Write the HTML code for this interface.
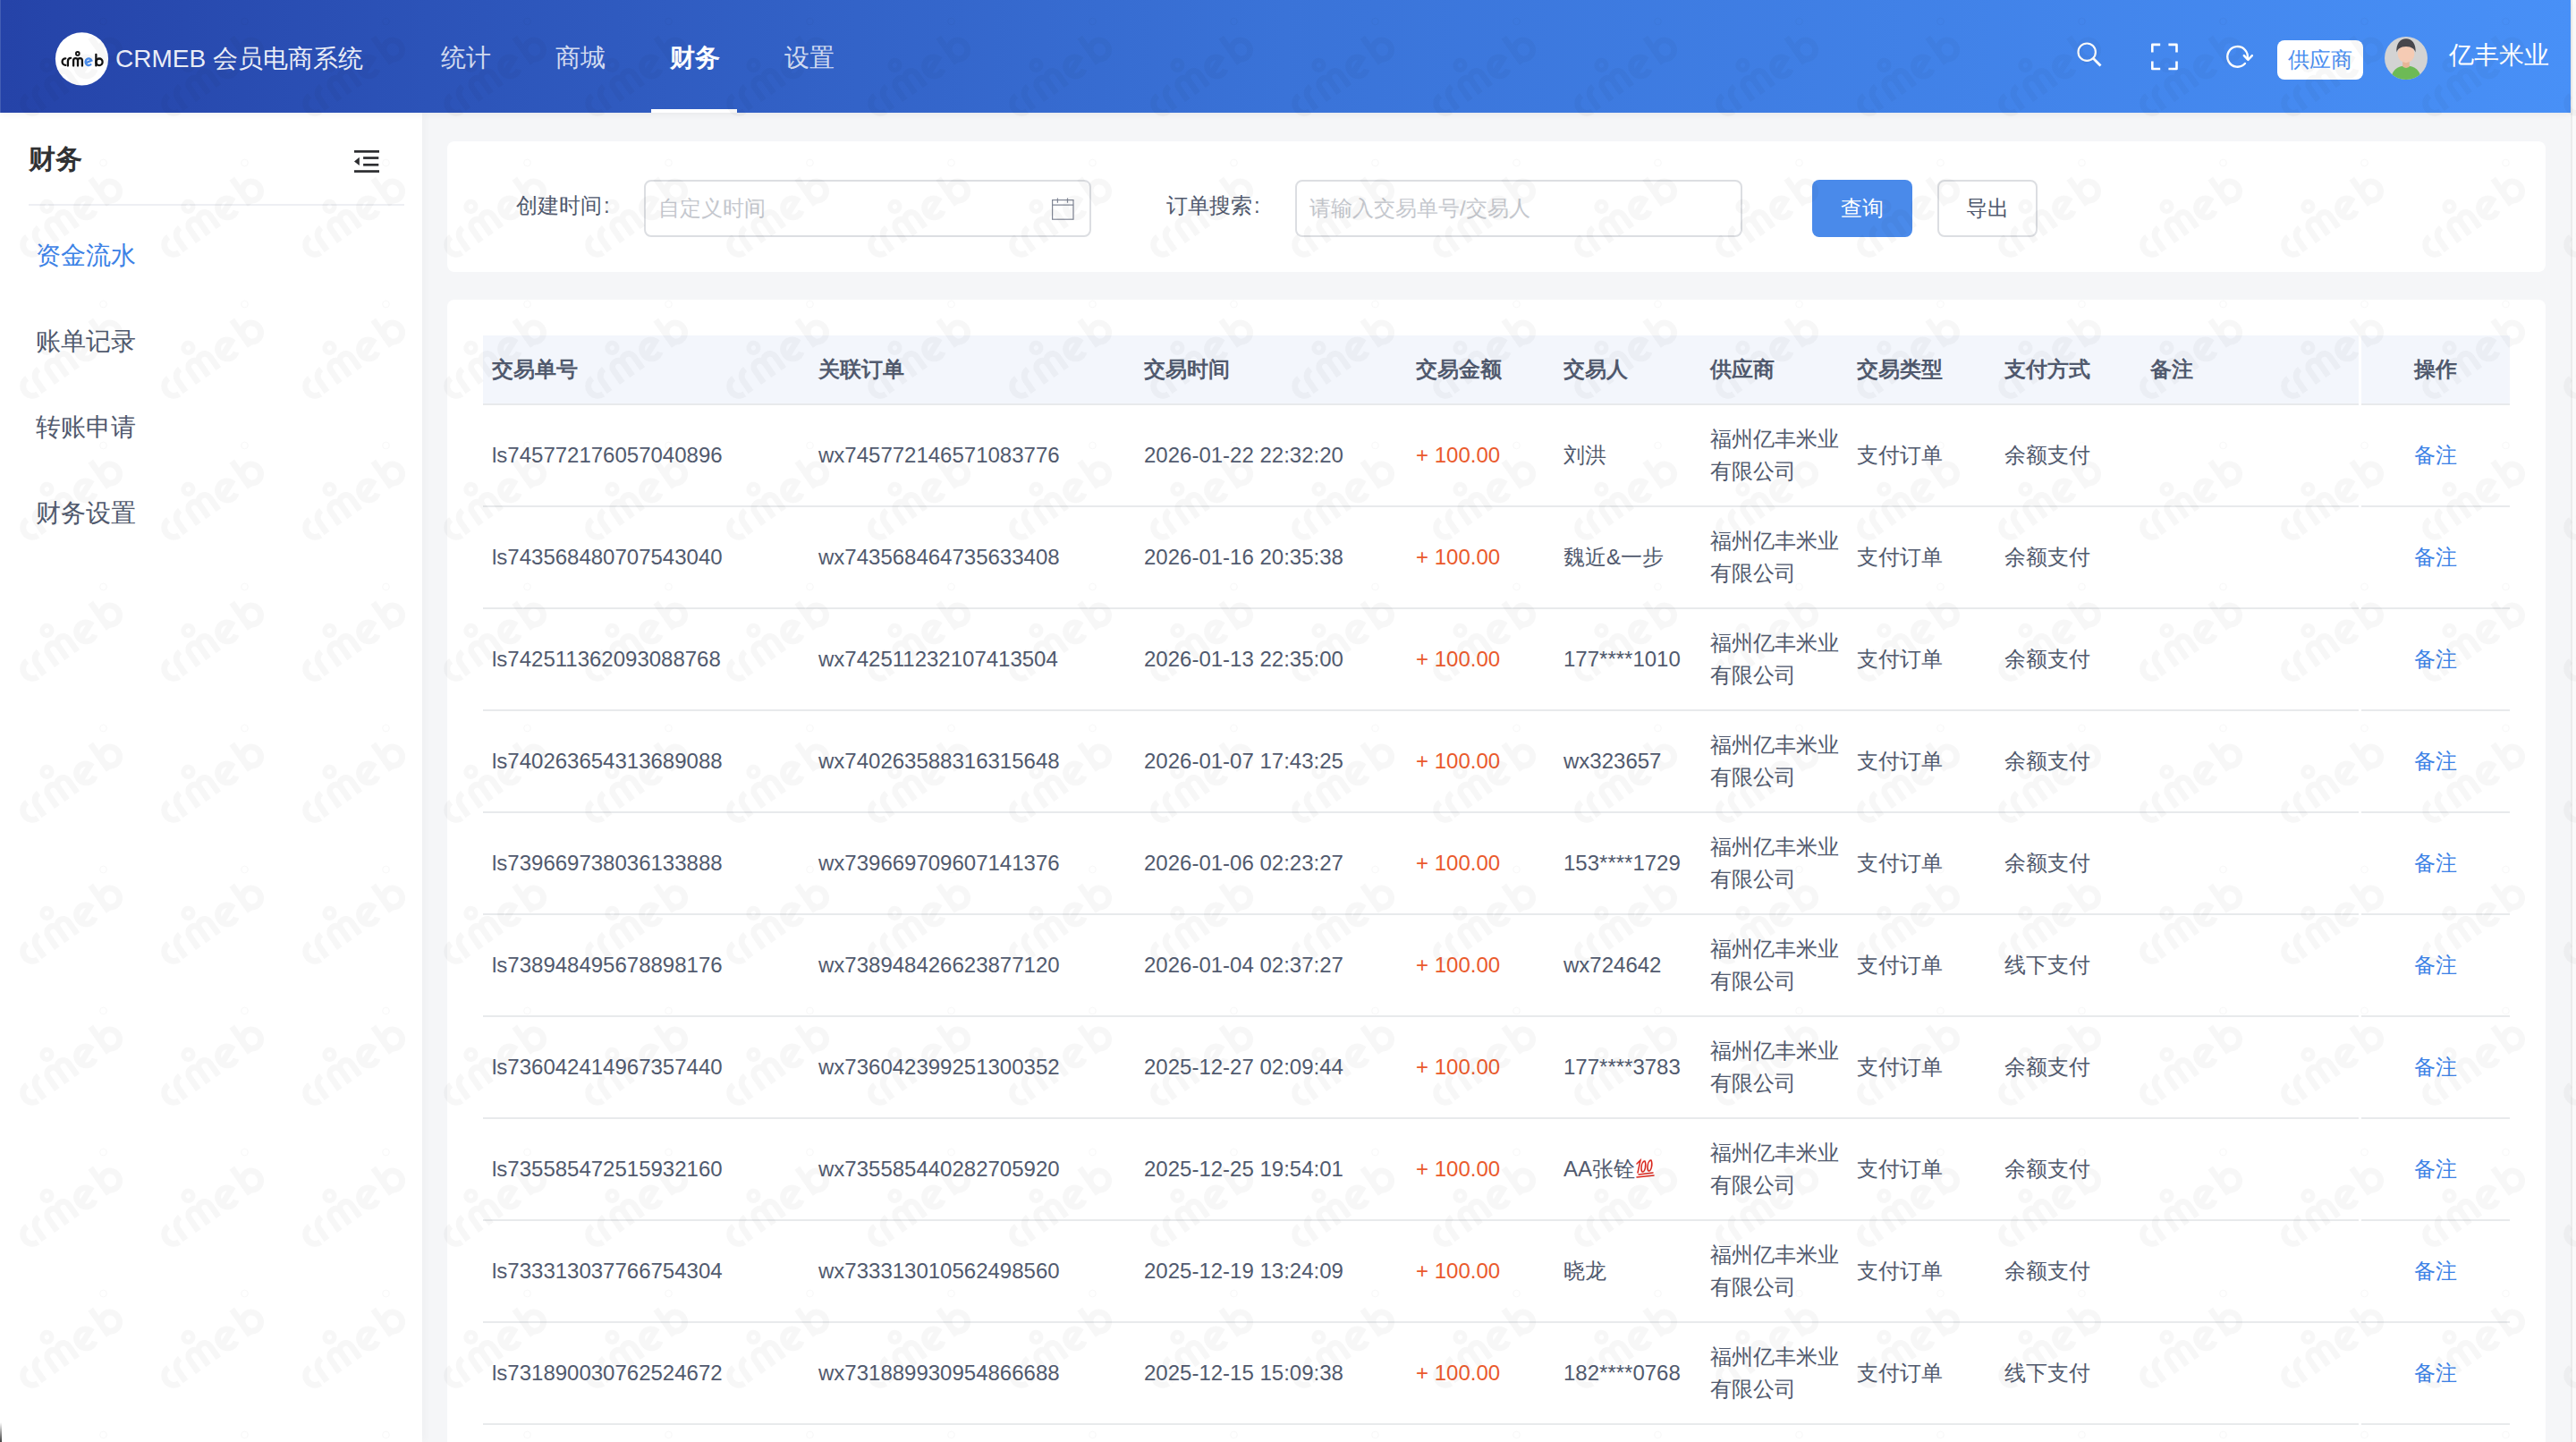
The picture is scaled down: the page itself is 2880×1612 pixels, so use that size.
<!DOCTYPE html>
<html><head><meta charset="utf-8">
<style>
*{box-sizing:border-box;margin:0;padding:0}
html,body{width:2880px;height:1612px;overflow:hidden;background:#f5f6f8;font-family:"Liberation Sans",sans-serif;color:#515a6e}
.abs{position:absolute}
#hdr{position:absolute;left:0;top:0;width:2874px;height:126px;background:linear-gradient(90deg,#2543a8 0%,#3a73d8 50%,#4890f7 100%);box-shadow:0 2px 8px rgba(0,0,0,.06);z-index:2}
#sb{position:absolute;left:2874px;top:0;width:6px;height:1612px;background:#fafafa;border-left:2px solid #ececec}
#side{position:absolute;left:0;top:126px;width:472px;height:1486px;background:#fff;box-shadow:2px 0 10px rgba(0,0,0,.035)}
.nav{position:absolute;top:45px;font-size:28px;line-height:40px;color:rgba(255,255,255,.8);white-space:nowrap}
.card{position:absolute;left:500px;width:2346px;background:#fff;border-radius:8px}
.menu{position:absolute;left:40px;font-size:28px;line-height:40px;color:#515a6e;white-space:nowrap}
.lbl{position:absolute;top:210px;font-size:24px;line-height:40px;color:#515a6e;white-space:nowrap}
.inp{position:absolute;top:201px;height:64px;width:500px;border:2px solid #dcdee2;border-radius:8px;background:#fff}
.ph{position:absolute;left:14px;top:10px;font-size:24px;line-height:40px;color:#c5c8ce;white-space:nowrap}
.btn{position:absolute;top:201px;height:64px;width:112px;border-radius:8px;font-size:24px;line-height:60px;text-align:center}
table{position:absolute;top:375px;border-collapse:collapse;table-layout:fixed;font-size:24px}
td,th{padding:0 10px;text-align:left;vertical-align:middle;border-bottom:2px solid #e8eaec;white-space:normal;line-height:36px}
th{height:77px;background:#f3f6fc;font-weight:bold;color:#515a6e}
td{height:114px;color:#515a6e}
#tb{left:540px}#tbf{left:2640px}
.e100{vertical-align:-3px}
.amt{color:#ea5a2c}
.link{color:#3d82e6}
</style></head><body>
<div id="hdr">
  <svg class="abs" style="left:60px;top:34px" width="64" height="64" viewBox="60 34 64 64"><circle cx="91.5" cy="65.8" r="29.6" fill="#fff"/>
<g fill="none" stroke="#111" stroke-width="2.3" stroke-linecap="round">
<path d="M73.3 65.3A3.7 3.8 0 0 0 73.3 72.9"/>
<path d="M75.9 73.6V68.2A3.4 3.4 0 0 1 79.2 64.9"/>
<path d="M82.1 73.6V67.6A2.45 2.5 0 0 1 87 67.6V73.6M87 67.6A2.45 2.5 0 0 1 91.9 67.6V73.6"/>
<circle cx="86.8" cy="59.9" r="1.9" stroke-width="1.8"/>
<path d="M107.4 60.8V73.4"/><ellipse cx="111" cy="69.3" rx="3.6" ry="3.8"/>
</g>
<path d="M95.8 70.4L102.4 67.6A3.6 3.8 0 1 0 101.4 72.2" fill="none" stroke="#4a8ef0" stroke-width="2.3" stroke-linecap="round"/>
</svg>
  <div class="abs" style="left:129px;top:46px;font-size:28px;line-height:40px;color:rgba(255,255,255,.92);white-space:nowrap">CRMEB 会员电商系统</div>
  <div class="nav" style="left:493px">统计</div>
  <div class="nav" style="left:621px">商城</div>
  <div class="nav" style="left:749px;color:#fff;font-weight:bold">财务</div>
  <div class="nav" style="left:877px">设置</div>
  <div class="abs" style="left:728px;top:122px;width:96px;height:4px;background:#fff"></div>

  <svg class="abs" style="left:2318px;top:44px" width="36" height="36" viewBox="0 0 36 36"><g fill="none" stroke="#fff"><circle cx="15.2" cy="14.2" r="9.7" stroke-width="2.2"/><path d="M22.3 21.3L30.5 29.5" stroke-width="2.8"/></g></svg>
  <svg class="abs" style="left:2400px;top:44px" width="40" height="40" viewBox="0 0 40 40"><g fill="none" stroke="#fff" stroke-width="2.6" stroke-linejoin="round"><path d="M6.3 14.6V5.9H15.2M24.4 5.9H33.5V14.6M33.5 24.4V33H24.4M15.2 33H6.3V24.4"/></g></svg>
  <svg class="abs" style="left:2484px;top:46px" width="40" height="36" viewBox="0 0 40 36"><g fill="none" stroke="#fff" stroke-width="2.4" stroke-linecap="round" stroke-linejoin="round"><path d="M25.9 25A11.3 11.3 0 1 1 28.6 19.8"/><path d="M24.8 16.1L29.4 20.9L33.9 16.1"/></g></svg>
  <div class="abs" style="left:2546px;top:45px;width:96px;height:44px;border-radius:8px;background:#fff;font-size:24px;line-height:44px;text-align:center;color:#4a8ef0">供应商</div>
  <svg class="abs" style="left:2666px;top:41px" width="48" height="48" viewBox="0 0 48 48"><defs><clipPath id="avc"><circle cx="24" cy="24" r="24"/></clipPath></defs><g clip-path="url(#avc)"><rect width="48" height="48" fill="#d3d3d3"/>
<path d="M7.5 48C7.5 38 14 32.5 24 32.5S40.5 38 40.5 48Z" fill="#6dba55"/>
<path d="M20.2 26H27.8V33.6Q24 36.2 20.2 33.6Z" fill="#e8b596"/>
<ellipse cx="24" cy="19" rx="9.4" ry="10.2" fill="#f5cbb4"/>
<path d="M13.4 17.5C12.6 8 17.5 2.2 24 2.2C30.5 2.2 35.4 8 34.6 17.5C33.4 13.8 30.5 11.2 24 11C17.5 11.2 14.6 13.8 13.4 17.5Z" fill="#48474c"/>
</g></svg>
  <div class="abs" style="left:2738px;top:42px;font-size:28px;line-height:40px;color:#fff;white-space:nowrap">亿丰米业</div>
</div>
<div id="sb"></div>
<div class="abs" style="left:0;top:0;width:1px;height:126px;background:rgba(255,255,255,.14);z-index:3"></div>
<div class="abs" style="left:0;top:1590px;width:1.5px;height:22px;background:linear-gradient(rgba(0,0,0,0),rgba(0,0,0,.75));z-index:11"></div>
<div id="side">
  <div class="abs" style="left:32px;top:30px;font-size:30px;line-height:44px;font-weight:bold;color:#303133">财务</div>
  <div class="abs" style="left:32px;top:102px;width:420px;height:2px;background:#eeeff3"></div>
  <svg class="abs" style="left:390px;top:36px" width="40" height="36" viewBox="390 162 40 36"><g fill="#2c2d30"><rect x="396" y="168" width="28" height="2.7"/><rect x="406.1" y="175.2" width="17.2" height="2.7"/><rect x="406.1" y="182.9" width="17.2" height="2.7"/><rect x="396" y="190.2" width="28" height="2.7"/><path d="M396 180.4L401.8 175.8V185Z"/></g></svg>
  <div class="menu" style="top:140px;color:#3d82e6">资金流水</div>
  <div class="menu" style="top:236px">账单记录</div>
  <div class="menu" style="top:332px">转账申请</div>
  <div class="menu" style="top:428px">财务设置</div>
</div>
<div class="card" style="top:158px;height:146px"></div>
<div class="card" style="top:335px;height:1300px"></div>
<div class="lbl" style="left:577px">创建时间<span style="margin-left:2px">:</span></div>
<div class="inp" style="left:720px"><div class="ph">自定义时间</div><svg class="abs" style="left:454px;top:17.5px" width="26" height="26" viewBox="0 0 26 26"><g fill="none" stroke="#808695" stroke-width="1.2"><rect x="0.6" y="2.6" width="23.4" height="21.6"/><path d="M0.6 8.1H24M6.4 0.5V5.8M17.5 0.5V5.8"/></g></svg></div>
<div class="lbl" style="left:1304px">订单搜索<span style="margin-left:2px">:</span></div>
<div class="inp" style="left:1448px"><div class="ph">请输入交易单号/交易人</div></div>
<div class="btn" style="left:2026px;background:#4a8aea;color:#fff;line-height:64px">查询</div>
<div class="btn" style="left:2166px;border:2px solid #dcdee2;color:#515a6e;background:#fff">导出</div>
<svg id="wm" style="position:absolute;left:0;top:0;z-index:10;pointer-events:none" width="2880" height="1612"><defs><pattern id="wmp" width="158" height="158" patternUnits="userSpaceOnUse"><g opacity="0.03"><g transform="translate(36.2 115.8) rotate(-35) scale(2.81) translate(-73.3 -69.1)" fill="none" stroke="#000" stroke-width="2.4" stroke-linecap="butt">
<path d="M73.3 65.3A3.7 3.8 0 0 0 73.3 72.9"/>
<path d="M75.9 73.6V68.2A3.4 3.4 0 0 1 79.2 64.9"/>
<path d="M82.1 73.6V67.6A2.45 2.5 0 0 1 87 67.6V73.6M87 67.6A2.45 2.5 0 0 1 91.9 67.6V73.6"/>
<circle cx="86.8" cy="59.9" r="1.9" stroke-width="1.9"/>
<path d="M107.4 60.8V73.4"/><ellipse cx="111" cy="69.3" rx="3.6" ry="3.8"/>
<path d="M95.8 70.4L102.4 67.6A3.6 3.8 0 1 0 101.4 72.2"/>
</g><circle cx="115.5" cy="24" r="3.8" fill="none" stroke="#000" stroke-width="0.9"/></g></pattern></defs><rect width="2880" height="1612" fill="url(#wmp)"/></svg>
<!--TABLE-->
<table id="tb" style="width:2097px"><colgroup><col style="width:365px"><col style="width:364px"><col style="width:304px"><col style="width:165px"><col style="width:164px"><col style="width:164px"><col style="width:165px"><col style="width:163px"><col style="width:243px"></colgroup>
<tr><th>交易单号</th><th>关联订单</th><th>交易时间</th><th>交易金额</th><th>交易人</th><th>供应商</th><th>交易类型</th><th>支付方式</th><th>备注</th></tr>
<tr><td>ls745772176057040896</td><td>wx745772146571083776</td><td>2026-01-22 22:32:20</td><td class="amt">+ 100.00</td><td>刘洪</td><td>福州亿丰米业有限公司</td><td>支付订单</td><td>余额支付</td><td></td></tr>
<tr><td>ls743568480707543040</td><td>wx743568464735633408</td><td>2026-01-16 20:35:38</td><td class="amt">+ 100.00</td><td>魏近&amp;一步</td><td>福州亿丰米业有限公司</td><td>支付订单</td><td>余额支付</td><td></td></tr>
<tr><td>ls742511362093088768</td><td>wx742511232107413504</td><td>2026-01-13 22:35:00</td><td class="amt">+ 100.00</td><td>177****1010</td><td>福州亿丰米业有限公司</td><td>支付订单</td><td>余额支付</td><td></td></tr>
<tr><td>ls740263654313689088</td><td>wx740263588316315648</td><td>2026-01-07 17:43:25</td><td class="amt">+ 100.00</td><td>wx323657</td><td>福州亿丰米业有限公司</td><td>支付订单</td><td>余额支付</td><td></td></tr>
<tr><td>ls739669738036133888</td><td>wx739669709607141376</td><td>2026-01-06 02:23:27</td><td class="amt">+ 100.00</td><td>153****1729</td><td>福州亿丰米业有限公司</td><td>支付订单</td><td>余额支付</td><td></td></tr>
<tr><td>ls738948495678898176</td><td>wx738948426623877120</td><td>2026-01-04 02:37:27</td><td class="amt">+ 100.00</td><td>wx724642</td><td>福州亿丰米业有限公司</td><td>支付订单</td><td>线下支付</td><td></td></tr>
<tr><td>ls736042414967357440</td><td>wx736042399251300352</td><td>2025-12-27 02:09:44</td><td class="amt">+ 100.00</td><td>177****3783</td><td>福州亿丰米业有限公司</td><td>支付订单</td><td>余额支付</td><td></td></tr>
<tr><td>ls735585472515932160</td><td>wx735585440282705920</td><td>2025-12-25 19:54:01</td><td class="amt">+ 100.00</td><td>AA张铨<svg class="e100" width="22" height="24" viewBox="0 0 22 24"><g fill="none" stroke="#d9261c" stroke-width="1.5" stroke-linecap="round"><path d="M2 7 L6 3 L3 17"/><path d="M10 4 C7 6 6 14 8 16 C11 17 13 8 11 4 Z"/><path d="M17 3 C14 5 13 13 15 15 C18 16 20 7 18 3 Z"/><path d="M4 19 L20 17"/><path d="M2 22 L21 20"/></g></svg></td><td>福州亿丰米业有限公司</td><td>支付订单</td><td>余额支付</td><td></td></tr>
<tr><td>ls733313037766754304</td><td>wx733313010562498560</td><td>2025-12-19 13:24:09</td><td class="amt">+ 100.00</td><td>晓龙</td><td>福州亿丰米业有限公司</td><td>支付订单</td><td>余额支付</td><td></td></tr>
<tr><td>ls731890030762524672</td><td>wx731889930954866688</td><td>2025-12-15 15:09:38</td><td class="amt">+ 100.00</td><td>182****0768</td><td>福州亿丰米业有限公司</td><td>支付订单</td><td>线下支付</td><td></td></tr>
</table>
<table id="tbf" style="width:166px"><colgroup><col style="width:166px"></colgroup>
<tr><th style="text-align:center">操作</th></tr>
<tr><td class="link" style="text-align:center">备注</td></tr>
<tr><td class="link" style="text-align:center">备注</td></tr>
<tr><td class="link" style="text-align:center">备注</td></tr>
<tr><td class="link" style="text-align:center">备注</td></tr>
<tr><td class="link" style="text-align:center">备注</td></tr>
<tr><td class="link" style="text-align:center">备注</td></tr>
<tr><td class="link" style="text-align:center">备注</td></tr>
<tr><td class="link" style="text-align:center">备注</td></tr>
<tr><td class="link" style="text-align:center">备注</td></tr>
<tr><td class="link" style="text-align:center">备注</td></tr>
</table>
<!--/TABLE-->
</body></html>
